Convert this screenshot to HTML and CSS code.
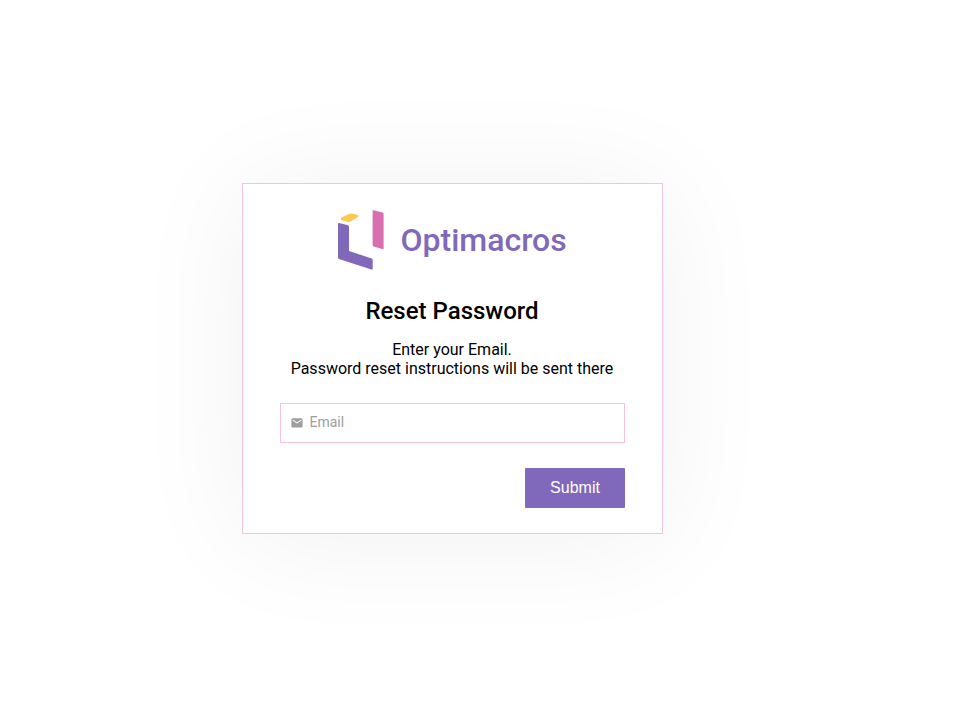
FILE: index.html
```html
<!DOCTYPE html>
<html lang="en">
<head>
<meta charset="utf-8">
<title>Reset Password</title>
<link rel="stylesheet" href="styles.css">
</head>
<body>
<main class="card">
  <div class="brand">
    <svg class="logo" width="46" height="60" viewBox="0 0 46 60" aria-hidden="true">
      <path fill="#fdc94f" d="M3.500 7.600 11 3.900Q12.500 3.200 14 3.600L19.700 5Q21.200 5.700 20 7L13 11.300Q11.700 12.200 10.300 11.900L3.600 10.300Q2 9 3.500 7.600Z"/>
      <path fill="#d96fae" d="M34.600 1Q34.600 0 35.600 .2L44.400 2.400Q45.600 2.800 45.600 4V38Q45.600 39.500 44.300 39.100L35.600 36.400Q34.600 36 34.600 35Z"/>
      <path fill="#8069bb" d="M0 14Q0 12.800 1.200 13.100L10 15.300Q11 15.700 11 17V41L33.700 48.500Q34.700 49 34.700 50V58.500Q34.700 60 33.400 59.600L1 49Q0 48.500 0 47.500Z"/>
    </svg>
    <span class="name">Optimacros</span>
  </div>
  <h1 class="title">Reset Password</h1>
  <p class="hint">Enter your Email.<br>Password reset instructions will be sent there</p>
  <form class="form">
    <label class="field">
      <svg class="mail" width="12" height="10" viewBox="0 0 12 10" aria-hidden="true"><path fill="#9e9e9e" d="M1.500 .3H10.500Q11.600 .3 11.600 1.400V8.400Q11.600 9.500 10.500 9.500H1.500Q.4 9.500 .4 8.400V1.400Q.4 .3 1.500 .3ZM1.500 1.400V2.600L6 5.400 10.500 2.600V1.400L6 4.200Z"/></svg>
      <input class="input" type="email" placeholder="Email">
    </label>
    <button class="submit" type="button">Submit</button>
  </form>
</main>
</body>
</html>
```
FILE: styles.css
```css
* { box-sizing: border-box; }
body {
  min-height: 100vh;
  margin: 0;
  padding: 183px 0 0 242px;
  background: #fff;
  color: #000;
  font-family: Roboto, sans-serif;
}
.card {
  width: 421px;
  height: 351px;
  padding: 26px 37px 0;
  background: #fff;
  border: 1px solid #f3c3e1;
  box-shadow: 0 5px 110px rgba(0, 0, 0, .06);
}
.brand {
  display: flex;
  align-items: center;
  height: 60px;
  margin-left: 58px;
}
.name {
  margin-left: 16.5px;
  color: #8069bb;
  font-size: 32px;
  font-weight: 500;
}
.title {
  margin: 27px 1px 0 0;
  font-size: 24px;
  line-height: 28px;
  font-weight: 500;
  text-align: center;
}
.hint {
  margin: 15px 1px 0 0;
  font-size: 16px;
  line-height: 19px;
  text-align: center;
}
.form {
  display: flex;
  flex-direction: column;
  margin-top: 25px;
}
.field {
  display: flex;
  align-items: center;
  height: 40px;
  padding: 0 10px 2px;
  border: 1px solid #f3c3e1;
}
.mail { margin-top: 1px; }
.input {
  flex: 1;
  min-width: 0;
  margin-left: 6.5px;
  padding: 0;
  border: 0;
  outline: 0;
  background: transparent;
  font: 14px Roboto, sans-serif;
}
.input::placeholder { color: #9e9e9e; }
.submit {
  align-self: flex-end;
  width: 100px;
  height: 40px;
  margin-top: 25px;
  padding: 0 0 1px;
  border: 0;
  border-radius: 1px;
  background: #8069bb;
  color: #fff;
  font: 16px "Liberation Sans", Arial, sans-serif;
}
```
